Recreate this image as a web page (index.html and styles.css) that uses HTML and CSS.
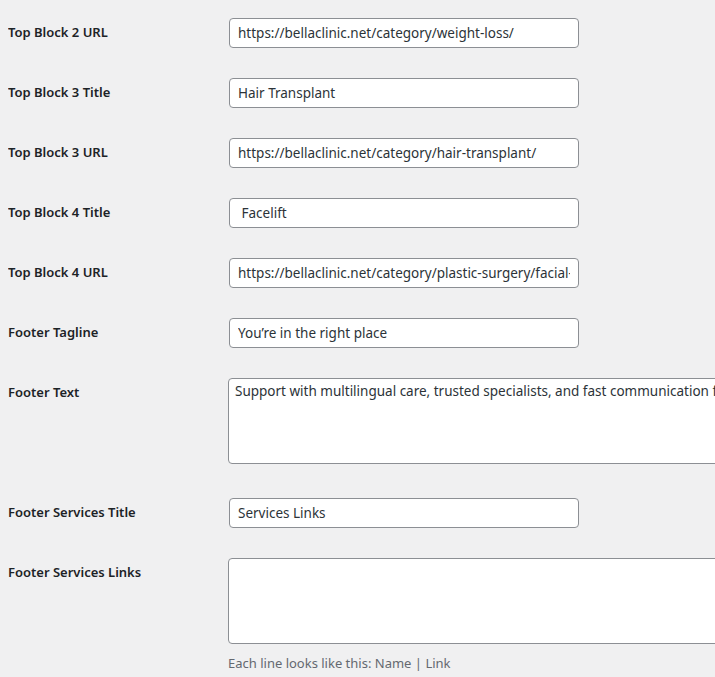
FILE: index.html
```html
<!DOCTYPE html>
<html>
<head>
  <title>Theme Options</title>
  <link rel="stylesheet" href="styles.css">
</head>
<body>
  <div class="wrap">
    <!-- Settings rows -->
    <table class="form-table">
      <tr>
        <th><label for="tb2url">Top Block 2 URL</label></th>
        <td><input type="text" id="tb2url" class="regular-text" value="https://bellaclinic.net/category/weight-loss/"></td>
      </tr>
      <tr>
        <th><label for="tb3title">Top Block 3 Title</label></th>
        <td><input type="text" id="tb3title" class="regular-text" value="Hair Transplant"></td>
      </tr>
      <tr>
        <th><label for="tb3url">Top Block 3 URL</label></th>
        <td><input type="text" id="tb3url" class="regular-text" value="https://bellaclinic.net/category/hair-transplant/"></td>
      </tr>
      <tr>
        <th><label for="tb4title">Top Block 4 Title</label></th>
        <td><input type="text" id="tb4title" class="regular-text" value=" Facelift"></td>
      </tr>
      <tr>
        <th><label for="tb4url">Top Block 4 URL</label></th>
        <td><input type="text" id="tb4url" class="regular-text" value="https://bellaclinic.net/category/plastic-surgery/facial-plastic-surgery/facelift/"></td>
      </tr>
      <tr>
        <th><label for="ftagline">Footer Tagline</label></th>
        <td><input type="text" id="ftagline" class="regular-text" value="You’re in the right place"></td>
      </tr>
      <tr>
        <th><label for="ftext">Footer Text</label></th>
        <td><textarea id="ftext" class="large-text" rows="4">Support with multilingual care, trusted specialists, and fast communication for every patient.</textarea></td>
      </tr>
      <tr>
        <th><label for="fstitle">Footer Services Title</label></th>
        <td><input type="text" id="fstitle" class="regular-text" value="Services Links"></td>
      </tr>
      <tr>
        <th><label for="fslinks">Footer Services Links</label></th>
        <td>
          <textarea id="fslinks" class="large-text" rows="4"></textarea>
          <p class="description">Each line looks like this: Name | Link</p>
        </td>
      </tr>
    </table>
  </div>
</body>
</html>
```

FILE: styles.css
```css
/* Admin page base */
html {
  overflow: hidden;
}

body {
  margin: 3px 0 0 8px;
  background-color: #f0f0f1;
  color: #3c434a;
  font-family: "Noto Sans", Arial, sans-serif;
  font-size: 14px;
}

/* Clip the wide fields at the window edge */
.wrap {
  overflow: hidden;
}

/* Settings table */
.form-table {
  border-collapse: collapse;
  table-layout: fixed;
  width: 100%;
}

.form-table th {
  width: 200px;
  padding: 20px 10px 20px 0;
  text-align: left;
  vertical-align: top;
  font-size: 13px;
  font-weight: 600;
  line-height: 18px;
  color: #1d2327;
  white-space: nowrap;
}

.form-table td {
  padding: 15px 10px;
  vertical-align: middle;
  line-height: 1.3;
}

/* Fields */
input.regular-text {
  box-sizing: border-box;
  width: 350px;
  height: 30px;
  margin: 0 1px;
  padding: 0 8px;
  border: 1px solid #8c8f94;
  border-radius: 4px;
  background-color: #ffffff;
  color: #2c3338;
  font-family: inherit;
  font-size: 13.5px;
  line-height: 2;
  vertical-align: middle;
}

textarea.large-text {
  display: block;
  box-sizing: border-box;
  width: 700px;
  height: 86px;
  margin: 0 0 4px;
  padding: 2px 6px;
  border: 1px solid #8c8f94;
  border-radius: 4px;
  background-color: #ffffff;
  color: #2c3338;
  font-family: inherit;
  font-size: 13.5px;
  line-height: 20px;
  resize: none;
  white-space: nowrap;
  overflow: hidden;
}

.description {
  margin: 10px 0 0;
  font-size: 13px;
  line-height: 1.5;
  color: #646970;
}
```
